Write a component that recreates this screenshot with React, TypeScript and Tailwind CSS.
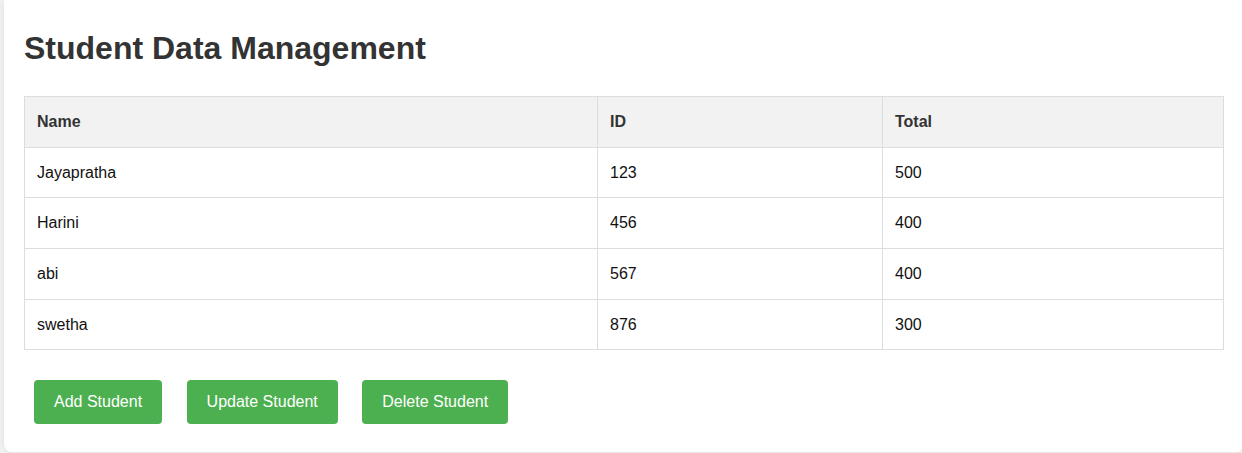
const students = [
  { name: "Jayapratha", id: "123", total: "500" },
  { name: "Harini", id: "456", total: "400" },
  { name: "abi", id: "567", total: "400" },
  { name: "swetha", id: "876", total: "300" },
];

const actions = ["Add Student", "Update Student", "Delete Student"];

export default function App() {
  return (
    <div className="w-[1242px] h-[453px] overflow-hidden bg-[#f4f4f4] pl-[4px] font-['Liberation_Sans',Arial,sans-serif] leading-[1.6]">
      <div className="w-[1240px] bg-white rounded-b-lg shadow-[0_0_10px_rgba(0,0,0,0.1)] px-[20px] pt-[23px] pb-[28px]">
        <h1 className="text-[32px] font-bold text-[#333] mb-[22px]">Student Data Management</h1>

        {/* Student table */}
        <table className="w-[1200px] border-collapse border border-[#ddd] text-[16px] table-fixed">
          <colgroup>
            <col className="w-[573px]" />
            <col className="w-[285px]" />
            <col />
          </colgroup>
          <thead>
            <tr className="bg-[#f2f2f2]">
              <th className="border border-[#ddd] p-[12px] text-left font-bold text-[#333]">Name</th>
              <th className="border border-[#ddd] p-[12px] text-left font-bold text-[#333]">ID</th>
              <th className="border border-[#ddd] p-[12px] text-left font-bold text-[#333]">Total</th>
            </tr>
          </thead>
          <tbody>
            {students.map((s) => (
              <tr key={s.id}>
                <td className="border border-[#ddd] p-[12px] text-[#111]">{s.name}</td>
                <td className="border border-[#ddd] p-[12px] text-[#111]">{s.id}</td>
                <td className="border border-[#ddd] p-[12px] text-[#111]">{s.total}</td>
              </tr>
            ))}
          </tbody>
        </table>

        {/* Actions */}
        <div className="flex gap-[24.5px] pl-[10px] mt-[30px]">
          {actions.map((label) => (
            <button
              key={label}
              className="h-[44px] px-[20px] bg-[#4caf50] text-white text-[16px] rounded-[4px] leading-none"
            >
              {label}
            </button>
          ))}
        </div>
      </div>
    </div>
  );
}
